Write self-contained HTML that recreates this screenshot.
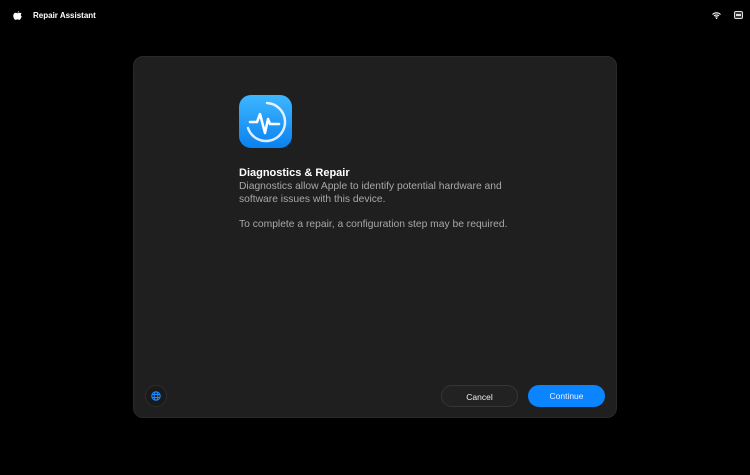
<!DOCTYPE html>
<html><head><style>
body{margin:0;width:750px;height:475px;background:#000;position:relative;overflow:hidden;font-family:"Liberation Sans",sans-serif}
.top{position:absolute;top:11px;left:33px;color:#fff;font-size:8px;font-weight:bold}
.panel{position:absolute;left:133px;top:56px;width:484px;height:362px;background:#1f1f1f;border-radius:10px;border:1px solid #2a2a2a;box-sizing:border-box}
.icon{position:absolute;left:239px;top:95px;width:53px;height:53px;border-radius:12px;background:linear-gradient(#3fb6ff,#0a82f0)}
.t{position:absolute;left:239px;color:#fff;font-size:11px;white-space:nowrap}
.b{color:#a8a8a8;font-size:10.3px}
.btn{position:absolute;top:385px;height:22px;width:77px;border-radius:11px;font-size:8.5px;text-align:center;line-height:22px}
</style></head><body>
<svg style="position:absolute;left:13px;top:11px" width="9" height="10" viewBox="0 0 9 10"><path d="M4.5 2.3C5.3 2.3 5.9 1.8 7 1.8 7.6 1.8 8.2 2.2 8.5 2.7 7.7 3.2 7.4 4.5 8.7 5.3 8.3 6.6 7.5 8.9 6.4 8.9 5.6 8.9 5.5 8.4 4.5 8.4 3.5 8.4 3.3 8.9 2.6 8.9 1.5 8.9 0.3 6.8 0.3 4.9 0.3 2.9 1.6 1.8 2.5 1.8 3.4 1.8 3.8 2.3 4.5 2.3ZM4.6 1.7C4.6 1 5.2 0.2 6 0.1 6 0.9 5.4 1.7 4.6 1.7Z" fill="#fff"/></svg>
<div class="top">Repair Assistant</div>
<svg style="position:absolute;left:712px;top:12px" width="9" height="7" viewBox="0 0 9 7"><path d="M0.5 2.5A5.5 5.5 0 0 1 8.5 2.5M2 4A3.5 3.5 0 0 1 7 4M3.3 5.3A1.6 1.6 0 0 1 5.7 5.3" stroke="#fff" stroke-width="1.1" fill="none"/><circle cx="4.5" cy="6.4" r=".7" fill="#fff"/></svg>
<div style="position:absolute;left:734px;top:11px;width:9px;height:8px;border:1px solid #ddd;border-radius:2px;box-sizing:border-box;background:#333"><div style="margin:2px 1px;height:2px;background:#ddd"></div></div>
<div class="panel"></div>
<div class="icon"><svg width="53" height="53" viewBox="0 0 53 53"><path d="M28 8A19 19 0 1 1 9 33" stroke="#fff" stroke-width="2.5" fill="none" stroke-linecap="round" opacity=".85"/><path d="M11 27H18L21 19L26 38L29 24L31 29H40" stroke="#fff" stroke-width="2.5" fill="none" stroke-linecap="round" stroke-linejoin="round"/></svg></div>
<div class="t" style="top:167px;font-weight:bold">Diagnostics &amp; Repair</div>
<div class="t b" style="top:181px">Diagnostics allow Apple to identify potential hardware and</div>
<div class="t b" style="top:194px">software issues with this device.</div>
<div class="t b" style="top:219px">To complete a repair, a configuration step may be required.</div>
<div style="position:absolute;left:145px;top:385px;width:22px;height:22px;border-radius:50%;background:#1a1a1a;border:1px solid #2c2c2c;box-sizing:border-box"><svg style="position:absolute;left:5px;top:5px" width="10" height="10" viewBox="0 0 10 10"><circle cx="5" cy="5" r="4.2" stroke="#1a8cff" stroke-width="1.1" fill="none"/><ellipse cx="5" cy="5" rx="1.8" ry="4.2" stroke="#1a8cff" stroke-width="1" fill="none"/><path d="M1 3.5H9M1 6.5H9" stroke="#1a8cff" stroke-width="1"/></svg></div>
<div class="btn" style="left:441px;background:#222;border:1px solid #363636;box-sizing:border-box;color:#eee">Cancel</div>
<div class="btn" style="left:528px;background:#0a84ff;color:#e8f3ff">Continue</div>
</body></html>
